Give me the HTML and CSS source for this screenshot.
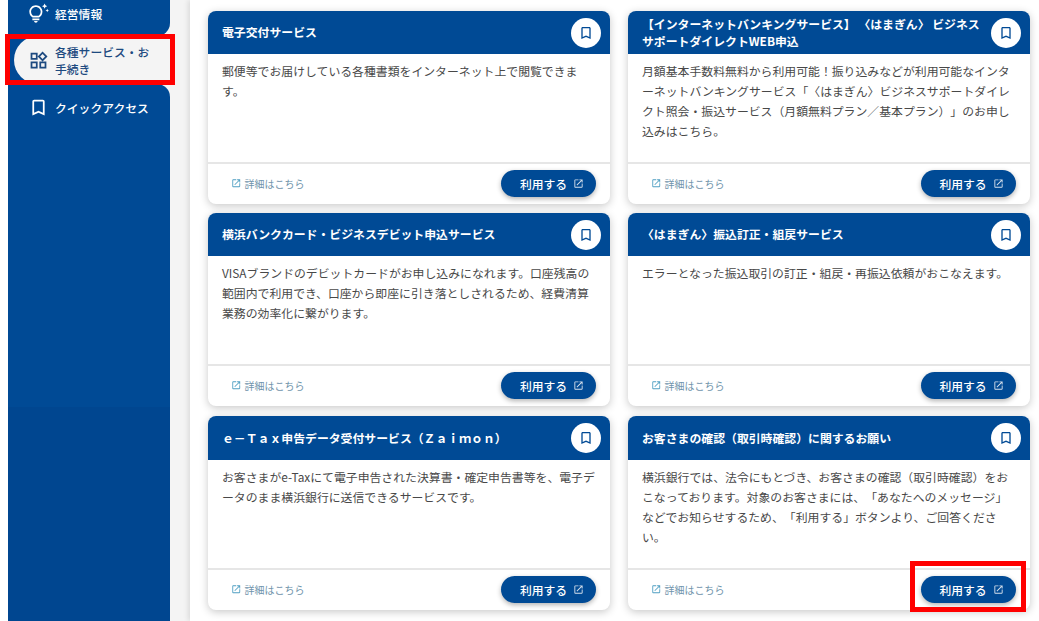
FILE: index.html
```html
<!DOCTYPE html>
<html lang="ja">
<head>
<meta charset="utf-8">
<title>各種サービス・お手続き</title>
<link rel="stylesheet" href="styles.css">
</head>
<body>
<svg class="defs" aria-hidden="true">
  <symbol id="i-ext" viewBox="0 0 24 24"><path d="M19 19H5V5h7V3H5a2 2 0 0 0-2 2v14a2 2 0 0 0 2 2h14c1.1 0 2-.9 2-2v-7h-2v7zM14 3v2h3.59l-9.83 9.83 1.41 1.41L19 6.41V10h2V3h-7z"/></symbol>
  <symbol id="i-mark" viewBox="0 0 24 24"><path d="M17 3H7c-1.1 0-2 .9-2 2v16l7-3 7 3V5c0-1.1-.9-2-2-2zm0 15l-5-2.18L7 18V5h10v13z"/></symbol>
  <symbol id="i-tips" viewBox="0 0 24 24"><path d="M7 20h4c0 1.1-.9 2-2 2s-2-.9-2-2zm-2-1h8v-2H5v2zm11.5-9.5c0 3.82-2.66 5.86-3.77 6.5H5.27C4.16 15.36 1.5 13.32 1.5 9.5 1.5 5.36 4.86 2 9 2s7.5 3.36 7.5 7.5zm-2 0C14.5 6.47 12.03 4 9 4S3.5 6.47 3.5 9.5c0 2.47 1.49 3.89 2.35 4.5h6.3c.86-.61 2.35-2.03 2.35-4.5zm6.87-2.13L20 8l1.37.63L22 10l.63-1.37L24 8l-1.37-.63L22 6l-.63 1.37zM19 6l.94-2.06L22 3l-2.06-.94L19 0l-.94 2.06L16 3l2.06.94L19 6z"/></symbol>
  <symbol id="i-widgets" viewBox="0 0 24 24"><path d="M16.66 4.52l2.83 2.83-2.83 2.83-2.83-2.83 2.83-2.83M9 5v4H5V5h4m10 10v4h-4v-4h4M9 15v4H5v-4h4m7.66-13.31L11 7.34 16.66 13l5.66-5.66-5.66-5.65zM11 3H3v8h8V3zm10 10h-8v8h8v-8zm-10 0H3v8h8v-8z"/></symbol>
</svg>
<div class="app">
  <nav class="sidebar">
    <a class="nav-item nav-before">
      <svg class="nav-icon"><use href="#i-tips"/></svg>
      <span>経営情報</span>
    </a>
    <div class="nav-active-row">
      <a class="nav-item nav-active">
        <svg class="nav-icon"><use href="#i-widgets"/></svg>
        <span>各種サービス・お手続き</span>
      </a>
      <span class="mark mark-nav"></span>
    </div>
    <a class="nav-item nav-after">
      <svg class="nav-icon"><use href="#i-mark"/></svg>
      <span>クイックアクセス</span>
    </a>
    <div class="nav-tail"></div>
  </nav>
  <main class="panel">
    <div class="cards">

      <article class="card">
        <header class="card-head">
          <h2 class="card-title">電子交付サービス</h2>
          <button class="fav"><svg><use href="#i-mark"/></svg></button>
        </header>
        <p class="card-body">郵便等でお届けしている各種書類をインターネット上で閲覧できます。</p>
        <footer class="card-foot">
          <a class="more"><svg><use href="#i-ext"/></svg>詳細はこちら</a>
          <a class="use">利用する<svg><use href="#i-ext"/></svg></a>
        </footer>
      </article>

      <article class="card">
        <header class="card-head">
          <h2 class="card-title">【インターネットバンキングサービス】 〈はまぎん〉 ビジネスサポートダイレクトWEB申込</h2>
          <button class="fav"><svg><use href="#i-mark"/></svg></button>
        </header>
        <p class="card-body">月額基本手数料無料から利用可能！振り込みなどが利用可能なインターネットバンキングサービス「〈はまぎん〉ビジネスサポートダイレクト照会・振込サービス（月額無料プラン／基本プラン）」のお申し込みはこちら。</p>
        <footer class="card-foot">
          <a class="more"><svg><use href="#i-ext"/></svg>詳細はこちら</a>
          <a class="use">利用する<svg><use href="#i-ext"/></svg></a>
        </footer>
      </article>

      <article class="card">
        <header class="card-head">
          <h2 class="card-title">横浜バンクカード・ビジネスデビット申込サービス</h2>
          <button class="fav"><svg><use href="#i-mark"/></svg></button>
        </header>
        <p class="card-body">VISAブランドのデビットカードがお申し込みになれます。口座残高の範囲内で利用でき、口座から即座に引き落としされるため、経費清算業務の効率化に繋がります。</p>
        <footer class="card-foot">
          <a class="more"><svg><use href="#i-ext"/></svg>詳細はこちら</a>
          <a class="use">利用する<svg><use href="#i-ext"/></svg></a>
        </footer>
      </article>

      <article class="card">
        <header class="card-head">
          <h2 class="card-title">〈はまぎん〉振込訂正・組戻サービス</h2>
          <button class="fav"><svg><use href="#i-mark"/></svg></button>
        </header>
        <p class="card-body">エラーとなった振込取引の訂正・組戻・再振込依頼がおこなえます。</p>
        <footer class="card-foot">
          <a class="more"><svg><use href="#i-ext"/></svg>詳細はこちら</a>
          <a class="use">利用する<svg><use href="#i-ext"/></svg></a>
        </footer>
      </article>

      <article class="card">
        <header class="card-head">
          <h2 class="card-title">ｅ－Ｔａｘ申告データ受付サービス（Ｚａｉｍｏｎ）</h2>
          <button class="fav"><svg><use href="#i-mark"/></svg></button>
        </header>
        <p class="card-body">お客さまがe-Taxにて電子申告された決算書・確定申告書等を、電子データのまま横浜銀行に送信できるサービスです。</p>
        <footer class="card-foot">
          <a class="more"><svg><use href="#i-ext"/></svg>詳細はこちら</a>
          <a class="use">利用する<svg><use href="#i-ext"/></svg></a>
        </footer>
      </article>

      <article class="card">
        <header class="card-head">
          <h2 class="card-title">お客さまの確認（取引時確認）に関するお願い</h2>
          <button class="fav"><svg><use href="#i-mark"/></svg></button>
        </header>
        <p class="card-body">横浜銀行では、法令にもとづき、お客さまの確認（取引時確認）をおこなっております。対象のお客さまには、「あなたへのメッセージ」などでお知らせするため、「利用する」ボタンより、ご回答ください。</p>
        <footer class="card-foot">
          <a class="more"><svg><use href="#i-ext"/></svg>詳細はこちら</a>
          <a class="use">利用する<svg><use href="#i-ext"/></svg><span class="mark mark-use"></span></a>
        </footer>
      </article>

    </div>
  </main>
</div>
</body>
</html>
```

FILE: styles.css
```css
* {
  box-sizing: border-box;
}

html,
body {
  margin: 0;
  height: 100%;
  overflow: hidden;
  background: #fff;
}

body {
  font-family: "Noto Sans CJK JP", "Noto Sans", sans-serif;
  font-size: 12px;
  color: #444;
  text-spacing-trim: space-all;
}

.defs {
  display: none;
}

.app {
  display: flex;
  height: 621px;
  padding-left: 8px;
}

/* Sidebar */
.sidebar {
  flex: none;
  width: 182px;
  padding-right: 20px;
  display: flex;
  flex-direction: column;
  background: #f4f4f4;
}

.nav-item {
  display: flex;
  align-items: center;
  gap: 6px;
  padding-left: 20px;
  padding-right: 12px;
  color: #fff;
  font-weight: 500;
  font-size: 11.8px;
  line-height: 17px;
  background: #004a95;
}

.nav-icon {
  flex: none;
  width: 21px;
  height: 21px;
  fill: currentColor;
}

.nav-before {
  height: 36px;
  padding-bottom: 9px;
  border-bottom-right-radius: 13px;
}

.nav-before .nav-icon {
  height: 22px;
}

.nav-active-row {
  position: relative;
  height: 48px;
  padding-left: 6px;
  background: #004a95;
}

.nav-active {
  height: 48px;
  padding-left: 14px;
  color: #1d4a80;
  background: #f4f4f4;
  border-radius: 24px 0 0 24px;
}

.nav-after {
  flex: 1;
  align-items: flex-start;
  padding-top: 13px;
  border-top-right-radius: 13px;
}

.nav-after span {
  margin-top: 2px;
}

.nav-tail {
  flex: none;
  height: 214px;
  background: #004690;
}

/* Annotation frames */
.mark {
  position: absolute;
  border: 5px solid #f00;
  pointer-events: none;
}

.mark-nav {
  top: -2px;
  right: -5px;
  bottom: -1px;
  left: -3px;
}

.mark-use {
  top: -15px;
  right: -10px;
  bottom: -9px;
  left: -11px;
}

/* Panel */
.panel {
  flex: 1;
  min-width: 0;
  padding: 11px 9px 0 18px;
  background: #fff;
  box-shadow: -2px 0 5px rgba(0, 0, 0, 0.1);
}

.cards {
  display: grid;
  grid-template-columns: 402px 401.5px;
  grid-template-rows: 193px 193px 195px;
  column-gap: 18px;
  row-gap: 9px;
}

.card {
  display: flex;
  flex-direction: column;
  min-height: 0;
  background: #fff;
  border-radius: 8px;
  box-shadow: 0 2px 8px rgba(0, 0, 0, 0.22);
}

.card:nth-child(n+5) {
  margin-top: 1px;
}

.card-head {
  flex: none;
  height: 43px;
  display: flex;
  align-items: center;
  justify-content: space-between;
  gap: 8px;
  padding: 0 9px 0 14px;
  background: #004a95;
  border-radius: 8px 8px 0 0;
}

.card:nth-child(n+5) .card-head {
  height: 44px;
}

.card-title {
  margin: 0 0 2px;
  color: #fff;
  font-size: 11.87px;
  font-weight: 700;
  line-height: 17px;
}

.fav {
  flex: none;
  width: 30px;
  height: 30px;
  padding: 0;
  display: flex;
  align-items: center;
  justify-content: center;
  background: #fff;
  border: 0;
  border-radius: 50%;
}

.fav svg {
  width: 16px;
  height: 16px;
  fill: #004a95;
}

.card-body {
  flex: 1;
  margin: 0;
  padding: 6.5px 14px 0;
  font-size: 11.87px;
  line-height: 20px;
  color: #484848;
}

.card-foot {
  flex: none;
  height: 42px;
  display: flex;
  align-items: center;
  justify-content: space-between;
  padding: 0 14px 2px 23px;
  border-top: 2px solid #e6e6e6;
}

.more {
  display: flex;
  align-items: center;
  gap: 3px;
  font-size: 10px;
  color: #6f93ab;
}

.more svg {
  width: 10.5px;
  height: 10.5px;
  fill: #4f9fc2;
}

.use {
  position: relative;
  width: 95px;
  height: 27px;
  display: flex;
  align-items: center;
  justify-content: center;
  gap: 6px;
  padding-left: 7px;
  color: #fff;
  font-size: 11.8px;
  font-weight: 500;
  background: #004a95;
  border-radius: 14px;
  box-shadow: 0 2px 5px rgba(0, 0, 0, 0.3);
}

.use svg {
  width: 11px;
  height: 11px;
  fill: #d5e0ec;
}
```
